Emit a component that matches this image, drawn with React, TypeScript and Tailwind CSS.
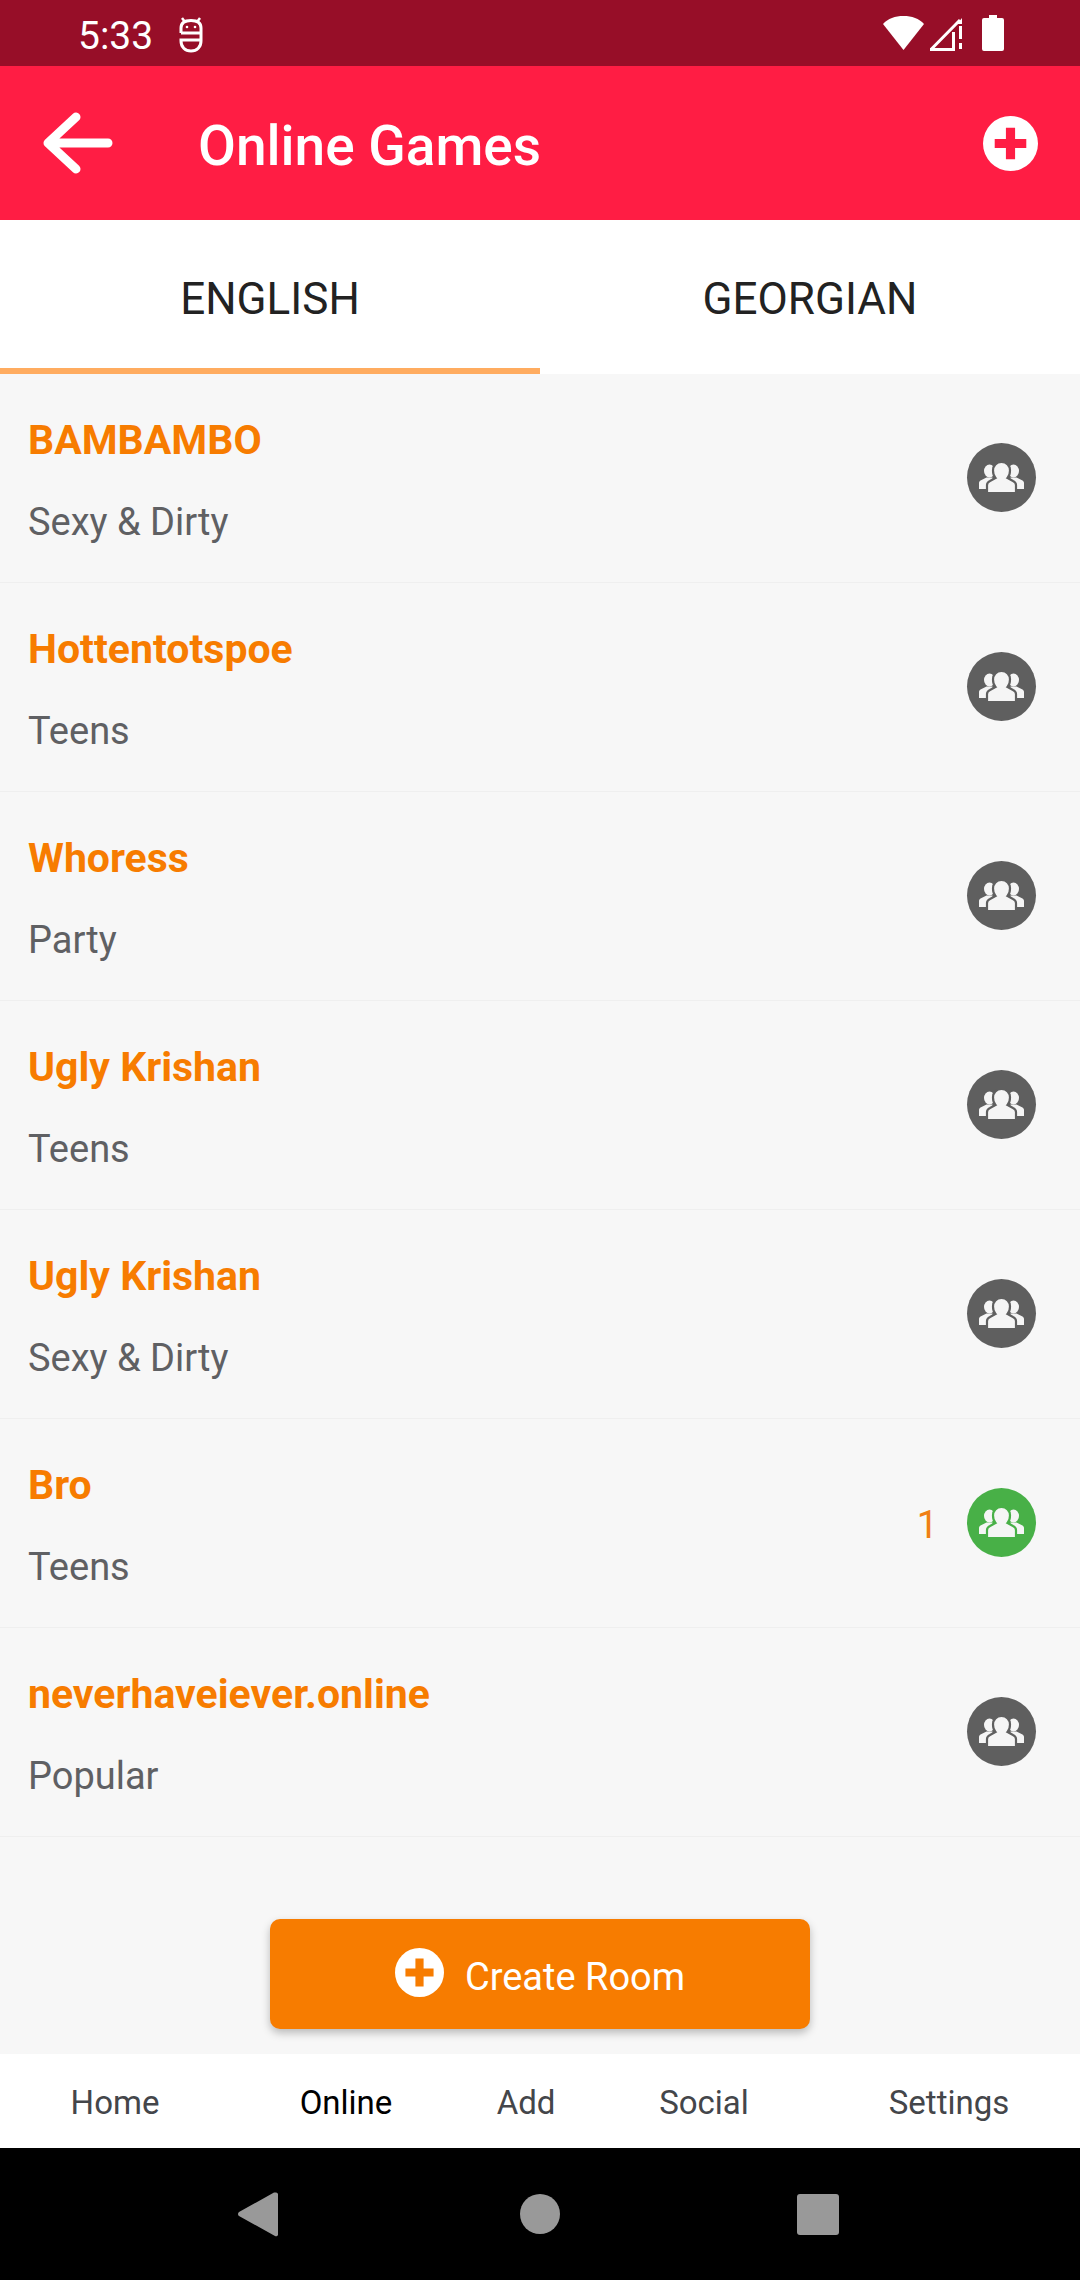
const rooms = [
  { name: "BAMBAMBO", tag: "Sexy & Dirty" },
  { name: "Hottentotspoe", tag: "Teens" },
  { name: "Whoress", tag: "Party" },
  { name: "Ugly Krishan", tag: "Teens" },
  { name: "Ugly Krishan", tag: "Sexy & Dirty" },
  { name: "Bro", tag: "Teens", count: 1 },
  { name: "neverhaveiever.online", tag: "Popular" },
];

const tabs = [
  { label: "Home", width: "w-[230px]", active: false },
  { label: "Online", width: "w-[232px]", active: true },
  { label: "Add", width: "w-[128px]", active: false },
  { label: "Social", width: "w-[228px]", active: false },
  { label: "Settings", width: "w-[262px]", active: false },
];

function PeopleIcon({ bg }: { bg: string }) {
  return (
    <svg viewBox="0 0 45 31" className="w-[45px] h-[31px]" fill="currentColor">
      <ellipse cx="10.500" cy="9" rx="5.500" ry="6.500" />
      <ellipse cx="34.500" cy="9" rx="5.500" ry="6.500" />
      <path d="M0 27v-6c0-1.500 1-2.500 2.500-3l5-2.500h6V27z" />
      <path d="M45 27v-6c0-1.500-1-2.500-2.500-3l-5-2.500h-6V27z" />
      <path
        d="M8 31v-8c0-2 1-3 3-4l5.500-3c-1.500-1.500-2.500-4-2.500-7.500C14 3.500 17.500 0 22.500 0S31 3.500 31 8.500c0 3.500-1 6-2.500 7.500l5.500 3c2 1 3 2 3 4v8z"
        stroke={bg}
        strokeWidth="2.200"
      />
    </svg>
  );
}

function PlusCircle({ className, plus }: { className: string; plus: string }) {
  return (
    <svg viewBox="0 0 54 54" className={className}>
      <circle cx="27" cy="27" r="27" fill="#fff" />
      <path d="M22.500 11.500h9v11h11v9h-11v11h-9v-11h-11v-9h11z" fill={plus} />
    </svg>
  );
}

function StatusBar() {
  return (
    <div className="h-[66px] bg-[#970e28] flex items-center pl-[78px] pr-[76px] text-white shrink-0">
      <span className="text-[39px] leading-none pt-[7px]">5:33</span>
      <svg viewBox="0 0 26 36" className="w-[26px] h-[36px] ml-[25px] mt-[4px]" fill="none" stroke="#fff" strokeWidth="3">
        <path d="M3 16V11C3 6 7 3.500 13 3.500S23 6 23 11v13c0 6-4 10-10 10S3 30 3 24v-1h20M3 16h20" />
        <path d="M4 1l3 4M22 1l-3 4" strokeWidth="2.500" />
        <circle cx="9" cy="10" r="1.300" fill="#fff" stroke="none" />
        <circle cx="17" cy="10" r="1.300" fill="#fff" stroke="none" />
      </svg>
      <div className="flex-1" />
      <svg viewBox="0 0 41 36" className="w-[41px] h-[36px]" fill="#fff">
        <path d="M0 9C5 3.500 12 1 20.500 1S36 3.500 41 9L20.500 35z" />
      </svg>
      <svg viewBox="0 0 34 36" className="w-[34px] h-[36px] ml-[5px]" fill="none" stroke="#fff" strokeWidth="3">
        <path d="M2 34.500 31 5M1 34.500h25M24.500 17v18" />
        <path d="M29 8l4-5v6h-4z" fill="#fff" stroke="none" />
        <path d="M31.500 11v13M31.500 28v6" />
      </svg>
      <svg viewBox="0 0 22 36" className="w-[22px] h-[36px] ml-[19px]" fill="#fff">
        <path d="M7 0h8v3h5a2 2 0 0 1 2 2v29a2 2 0 0 1-2 2H2a2 2 0 0 1-2-2V5a2 2 0 0 1 2-2h5z" />
      </svg>
    </div>
  );
}

function RoomRow({ name, tag, count }: { name: string; tag: string; count?: number }) {
  const bg = count !== undefined ? "#48b047" : "#5f5f5f";
  return (
    <div className="h-[209px] shrink-0 border-b border-[#efefef] flex items-center pl-[28px] pr-[44px]">
      <div className="flex-1 flex flex-col gap-[38px] mt-[6px]">
        <div className="text-[#f77c00] text-[41px] leading-[44px] font-bold">{name}</div>
        <div className="text-[#5f6063] text-[38px] leading-[44px]">{tag}</div>
      </div>
      {count !== undefined && (
        <span className="text-[#f07f13] text-[38px] leading-none mr-[29px] mt-[3px]">{count}</span>
      )}
      <div
        className={`w-[69px] h-[69px] -mt-[2px] rounded-full flex items-center justify-center text-[#f5f5f5] ${
          count !== undefined ? "bg-[#48b047]" : "bg-[#5f5f5f]"
        }`}
      >
        <PeopleIcon bg={bg} />
      </div>
    </div>
  );
}

export default function App() {
  return (
    <div className="w-[1080px] h-[2280px] flex flex-col bg-[#f7f7f7] overflow-hidden font-['Roboto',sans-serif]">
      <StatusBar />

      <header className="h-[154px] bg-[#ff1d44] flex items-center shrink-0 text-white">
        <svg viewBox="0 0 72 62" className="w-[72px] h-[62px] ml-[41px]" fill="none" stroke="#fff" strokeWidth="9" strokeLinecap="round" strokeLinejoin="round">
          <path d="M67 31H8M35 5 7 31l28 26" />
        </svg>
        <h1 className="text-[55px] font-medium leading-none ml-[85px] flex-1 pt-[6px]">Online Games</h1>
        <PlusCircle className="w-[55px] h-[55px] mr-[42px]" plus="#ff1d44" />
      </header>

      <nav className="h-[154px] bg-white flex shrink-0 text-[#222222] text-[44px]">
        <div className="w-1/2 flex items-center justify-center border-b-[6px] border-[#ffac60] pt-[10px]">ENGLISH</div>
        <div className="w-1/2 flex items-center justify-center border-b-[6px] border-transparent pt-[10px]">GEORGIAN</div>
      </nav>

      <div className="flex-1 flex flex-col">
        {rooms.map((room, i) => (
          <RoomRow key={i} {...room} />
        ))}
        <div className="flex-1 flex items-end justify-center pb-[25px]">
          <button className="w-[540px] h-[110px] bg-[#f77c00] rounded-[10px] shadow-[0_4px_8px_rgba(0,0,0,0.25)] flex items-center justify-center gap-[21px] text-white text-[38px]">
            <PlusCircle className="w-[49px] h-[49px] -mt-[4px]" plus="#f77c00" />
            <span className="pt-[6px]">Create Room</span>
          </button>
        </div>
      </div>

      <div className="h-[94px] bg-white flex shrink-0 text-[33px] text-[#44464a] pt-[3px]">
        {tabs.map((tab) => (
          <div
            key={tab.label}
            className={`${tab.width} flex items-center justify-center ${tab.active ? "text-black" : ""}`}
          >
            {tab.label}
          </div>
        ))}
      </div>

      <div className="h-[132px] bg-black flex items-center shrink-0 pl-[238px]">
        <svg viewBox="0 0 40 46" className="w-[40px] h-[46px]" fill="#999999">
          <path d="M38 1.500a2 2 0 0 1 2 1.500v40a2 2 0 0 1-3 2L1 25a2.500 2.500 0 0 1 0-4L36 1.500z" />
        </svg>
        <div className="w-[40px] h-[40px] ml-[242px] rounded-full bg-[#999999]" />
        <div className="w-[42px] h-[41px] ml-[237px] rounded-[3px] bg-[#999999]" />
      </div>
    </div>
  );
}
